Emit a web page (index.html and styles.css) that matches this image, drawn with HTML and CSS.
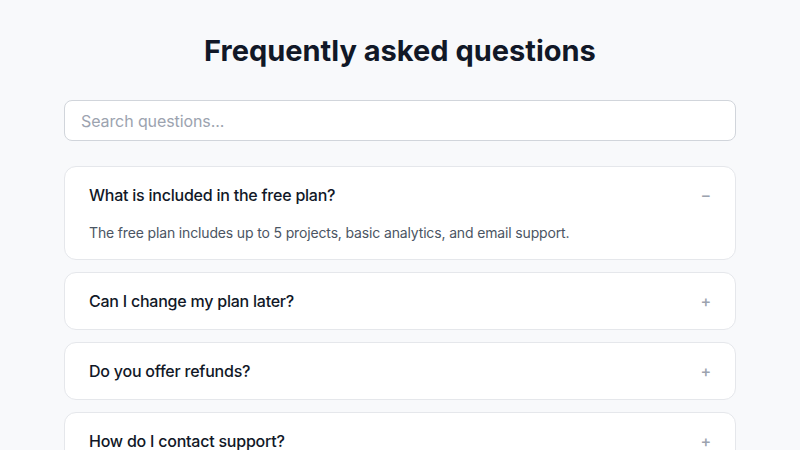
FILE: index.html
```html
<!DOCTYPE html>
<html lang="en">
<head>
<meta charset="utf-8">
<title>FAQ</title>
<link rel="stylesheet" href="styles.css">
</head>
<body>
<main class="faq">
  <h1 class="faq-title">Frequently asked questions</h1>
  <input class="faq-search" type="text" placeholder="Search questions...">
  <div class="faq-list">
    <div class="faq-item open">
      <div class="faq-q"><span>What is included in the free plan?</span><span class="faq-icon">−</span></div>
      <div class="faq-a">The free plan includes up to 5 projects, basic analytics, and email support.</div>
    </div>
    <div class="faq-item">
      <div class="faq-q"><span>Can I change my plan later?</span><span class="faq-icon">+</span></div>
    </div>
    <div class="faq-item">
      <div class="faq-q"><span>Do you offer refunds?</span><span class="faq-icon">+</span></div>
    </div>
    <div class="faq-item">
      <div class="faq-q"><span>How do I contact support?</span><span class="faq-icon">+</span></div>
    </div>
  </div>
</main>
</body>
</html>
```
FILE: styles.css
```css
* { box-sizing: border-box; }
html, body { margin: 0; padding: 0; }
body {
  background: #f8f9fb;
  font-family: Inter, "Noto Sans", sans-serif;
  color: #111827;
}
.faq {
  padding: 33px 64px 32px;
  display: flex;
  flex-direction: column;
}
.faq-title {
  margin: 0 0 32px;
  font-size: 29px;
  line-height: 35px;
  font-weight: 700;
  text-align: center;
  color: #111827;
}
.faq-search {
  width: 100%;
  height: 41px;
  padding: 0 16px;
  font: inherit;
  font-size: 16px;
  letter-spacing: -0.1px;
  color: #111827;
  background: #fff;
  border: 1px solid #d1d5db;
  border-radius: 8px;
  outline: none;
  margin: 0 0 25px;
}
.faq-search::placeholder { color: #9ca3af; }
.faq-list {
  display: flex;
  flex-direction: column;
  gap: 12px;
}
.faq-item {
  background: #fff;
  border: 1px solid #e5e7eb;
  border-radius: 12px;
}
.faq-q {
  display: flex;
  justify-content: space-between;
  align-items: center;
  padding: 18px 24px;
  font-size: 16px;
  line-height: 20px;
  font-weight: 500;
  letter-spacing: -0.23px;
  color: #111827;
}
.faq-icon {
  color: #9ca3af;
  font-size: 16px;
  font-weight: 500;
}
.faq-a {
  padding: 0 24px 16px;
  font-size: 14px;
  line-height: 20px;
  letter-spacing: -0.15px;
  color: #4b5563;
}
```
